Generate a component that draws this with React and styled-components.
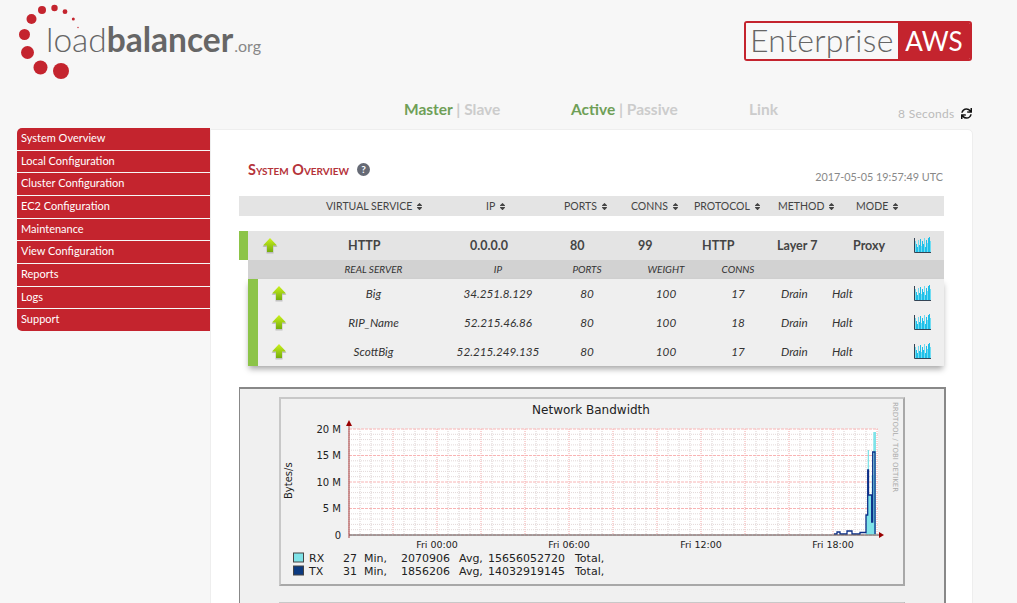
import React from 'react'
import styled, { createGlobalStyle } from 'styled-components'
import { FaSort, FaSync } from 'react-icons/fa'

const Global = createGlobalStyle`
  html, body { margin: 0; padding: 0; height: 603px; overflow: hidden; background: #f7f7f7; }
  body { font-family: Lato, 'Open Sans', sans-serif; color: #444; }
`
const Page = styled.div`
  width: 1017px;
  height: 603px;
  overflow: hidden;
`
const Header = styled.header`
  display: flex;
  justify-content: space-between;
  height: 96px;
  padding: 0 45px 0 18px;
`
const Logo = styled.div`
  position: relative;
  width: 250px;
  height: 82px;
`
const LogoText = styled.div`
  position: absolute;
  left: 28px;
  top: 18px;
  font-size: 33.5px;
  line-height: 42px;
  color: #666;
  font-weight: 300;
  white-space: nowrap;
  b { font-weight: 700; }
  small { font-size: 16px; font-weight: 400; color: #888; margin-left: 1px; }
`
const Badge = styled.div`
  display: flex;
  align-self: flex-start;
  margin-top: 21px;
  height: 40px;
  width: 228px;
  box-sizing: border-box;
  border: 2px solid #c4242e;
  border-radius: 3px;
  overflow: hidden;
`
const BadgeLight = styled.div`
  flex: 1;
  background: #f8f8f8;
  color: #666;
  font-size: 32px;
  font-weight: 300;
  line-height: 33px;
  padding-left: 4px;
  letter-spacing: 0.3px;
  white-space: nowrap;
`
const BadgeDark = styled.div`
  width: 72px;
  flex: none;
  background: #c4242e;
  color: #fff;
  font-size: 26px;
  font-weight: 400;
  line-height: 36px;
  text-align: center;
`
const StatusBar = styled.div`
  display: flex;
  height: 32px;
  padding-left: 404px;
  align-items: flex-start;
`
const StatusGroup = styled.div`
  width: ${p => p.$w}px;
  font-size: 15.5px;
  line-height: 26px;
  font-weight: 700;
  color: #ccc;
  white-space: nowrap;
  b { color: #6f9f57; font-weight: 700; }
`
const Timer = styled.div`
  display: flex;
  align-items: center;
  gap: 6px;
  margin-top: 10px;
  font-size: 12px;
  line-height: 15px;
  color: #bbb;
  letter-spacing: 0.3px;
  svg { color: #111; }
`
const Body = styled.div`
  display: flex;
  align-items: flex-start;
  padding-left: 17px;
`
const Sidebar = styled.nav`
  width: 193px;
  flex: none;
`
const MenuItem = styled.div`
  height: 21.66px;
  margin-bottom: 1px;
  background: #c4242e;
  color: #fff;
  font-size: 11px;
  line-height: 20px;
  padding-left: 4px;
  box-sizing: border-box;
  &:first-child { border-top-left-radius: 5px; }
  &:last-child { border-bottom-left-radius: 5px; }
`
const Main = styled.main`
  width: 763px;
  height: 480px;
  margin-top: 1px;
  box-sizing: border-box;
  background: #fff;
  border: 1px solid #eee;
  border-top-right-radius: 5px;
  padding: 0 28px;
`
const TitleRow = styled.div`
  display: flex;
  align-items: center;
  justify-content: space-between;
  height: 66px;
  padding: 16px 0 0 9px;
  box-sizing: border-box;
`
const Title = styled.h1`
  display: flex;
  align-items: center;
  gap: 8px;
  margin: 0 0 3px;
  font-size: 14.4px;
  font-weight: 700;
  font-variant: small-caps;
  color: #b5333a;
`
const Help = styled.span`
  display: inline-block;
  width: 13px;
  height: 13px;
  border-radius: 50%;
  background: #666a75;
  color: #fff;
  font-size: 10px;
  line-height: 13px;
  text-align: center;
  font-variant: normal;
`
const DateText = styled.span`
  font-size: 10.8px;
  color: #888;
  margin: 10px 1px 0 0;
`
const Row = styled.div`
  display: grid;
  align-items: center;
  white-space: nowrap;
`
const HeadRow = styled(Row)`
  grid-template-columns: 87px 160px 78px 67px 63px 84px 78px 1fr;
  height: 20px;
  background: #e4e4e4;
  font-size: 10.5px;
  color: #444;
  span { display: flex; align-items: center; gap: 3px; }
`
const ServiceRow = styled(Row)`
  grid-template-columns: 14px 86px 122px 100px 68px 64px 75px 76px 61px 1fr;
  height: 29px;
  margin-top: 15px;
  background: #e4e4e4;
  border-left: 9px solid #8cc448;
  font-size: 12.5px;
  font-weight: 700;
  color: #444;
`
const ServerGrid = styled(Row)`
  grid-template-columns: 63px 125px 124px 54px 104px 40px 74px 82px 1fr;
  margin-left: 9px;
  font-style: italic;
`
const ServerHead = styled(ServerGrid)`
  height: 19px;
  background: #d2d2d2;
  font-size: 10px;
  color: #333;
`
const ServerList = styled.div`
  margin-left: 9px;
  background: #efefef;
  border-left: 10px solid #8cc448;
  box-shadow: 0 4px 6px -1px rgba(0, 0, 0, 0.35);
`
const ServerRow = styled(ServerGrid)`
  grid-template-columns: 53px 125px 124px 54px 104px 40px 74px 82px 1fr;
  margin-left: 0;
  height: 29px;
  font-size: 11.7px;
  color: #333;
`
const Center = styled.span`
  text-align: center;
  margin-bottom: 2px;
`
const Left = styled.span`
  padding-left: ${p => p.$pad || 0}px;
  margin-bottom: 2px;
`
const ArrowCell = styled.span`
  display: flex;
  padding-left: 13px;
`
const GraphBox = styled.section`
  margin: 21px -2px 0 0;
  height: 240px;
  box-sizing: border-box;
  background: #f0f0f0;
  border: 1px solid #888;
  border-right-width: 2px;
  border-top-width: 2px;
  padding: 8px 39px 0 39px;
`
const GraphFrame = styled.div`
  height: 189px;
  margin-bottom: 16px;
  box-sizing: border-box;
  background: #f1f1f1;
  border: 2px solid #c8c8c8;
  border-right-color: #a8a8a8;
  border-bottom-color: #a8a8a8;
  svg { display: block; margin: -2px; }
`

const UpArrow = () => (
  <svg width="16" height="17" viewBox="0 0 16 17">
    <defs>
      <linearGradient id="up" x1="0" y1="0" x2="0" y2="1">
        <stop offset="0" stopColor="#ccf21c" />
        <stop offset="1" stopColor="#74ad0c" />
      </linearGradient>
    </defs>
    <path d="M8 1.5 15.5 9H11.5V15.5H4.5V9H.5Z" fill="#555" opacity=".3" transform="translate(0 1)" />
    <path d="M8 1 15 8.5H11V15H5V8.5H1Z" fill="url(#up)" />
  </svg>
)

const bars = [11, 8, 5, 12, 7, 13, 6, 11, 8, 14, 5, 12, 9, 14, 15, 11]
const GraphIcon = () => (
  <svg width="18" height="17" viewBox="0 0 18 17">
    {bars.map((h, i) => (
      <rect key={i} x={1 + i} y={15 - h} width="1" height={h} fill={i % 3 ? '#1fbfe8' : '#6fdcf2'} />
    ))}
    <path d="M.5 1V15.5H17" fill="none" stroke="#345" strokeWidth="1" />
  </svg>
)

const Sort = ({ children }) => (
  <span>{children} <FaSort size={9} /></span>
)

const menu = ['System Overview', 'Local Configuration', 'Cluster Configuration', 'EC2 Configuration', 'Maintenance', 'View Configuration', 'Reports', 'Logs', 'Support']

const servers = [
  { name: 'Big', ip: '34.251.8.129', conns: 17 },
  { name: 'RIP_Name', ip: '52.215.46.86', conns: 18 },
  { name: 'ScottBig', ip: '52.215.249.135', conns: 17 },
]

const logoDots = [
  [43, 71, 8], [22.5, 67.5, 7], [9.5, 52.5, 6.5], [6.5, 34.5, 5.5], [13.5, 19, 5],
  [24, 10, 4], [36.5, 8, 3.2], [47, 11.7, 2.4], [55.3, 19, 1.5], [60, 27.5, 0.7],
]

// chart area in frame coordinates
const X0 = 70
const X1 = 599
const Y0 = 138
const Y20 = 32
const vLines = Array.from({ length: 49 }, (_, i) => X0 + i * 11).filter(x => x <= X1)
const hLines = Array.from({ length: 21 }, (_, i) => Y0 - i * 5.3)

const labelFont = { fontFamily: '"DejaVu Sans", sans-serif', fontSize: 10, fill: '#222' }

const LegendRow = ({ y, color, name, min, avg, total }) => (
  <g style={{ ...labelFont, fontSize: 11 }}>
    <rect x="14.5" y={y - 9} width="10" height="9" fill={color} stroke="#444" />
    <text x="30" y={y}>{name}</text>
    <text x="64" y={y}>{min}</text>
    <text x="85" y={y}>Min,</text>
    <text x="122" y={y}>{avg}</text>
    <text x="180" y={y}>Avg,</text>
    <text x="209" y={y}>{total}</text>
    <text x="296" y={y}>Total,</text>
  </g>
)

const Chart = () => (
  <svg width="626" height="189" viewBox="0 0 626 189">
    <rect x={X0} y={Y20} width={X1 - X0} height={Y0 - Y20} fill="#fff" />
    {vLines.map((x, i) => (
      <line key={x} x1={x} x2={x} y1={Y20} y2={Y0} stroke={i % 4 === 0 ? '#f4a8a8' : '#dcd0d0'} strokeDasharray="1 1" />
    ))}
    {hLines.map((y, i) => (
      <line key={i} x1={X0} x2={X1} y1={y} y2={y} stroke={i % 5 === 0 ? '#f8b4b4' : '#e2d8d8'} strokeDasharray={i % 5 === 0 ? '3 1' : '1 1'} />
    ))}
    <path d="M587 137.5V118H588.7V53H590V98H592.7V78H594.3V35H597V137.5Z" fill="#7fe3e8" />
    <path d="M555 137H558V135H561V137H568V134H573V137H581V135.5H587V118H588.7V73H589.5V98H592.7V125H593.7V55H596V137" fill="none" stroke="#0c2f88" strokeWidth="1.3" />
    <line x1={X0} x2={X1 + 3} y1={Y0} y2={Y0} stroke="#555" />
    <line x1={X0} x2={X0} y1={Y0 + 3} y2={Y20 - 4} stroke="#a04040" />
    <path d={`M${X0 - 3} ${Y20 - 3}L${X0} ${Y20 - 9}L${X0 + 3} ${Y20 - 3}Z`} fill="#900" />
    <path d={`M${X1 + 1} ${Y0 - 3}L${X1 + 6} ${Y0}L${X1 + 1} ${Y0 + 3}Z`} fill="#900" />
    <text x="312" y="17" textAnchor="middle" style={{ ...labelFont, fontSize: 12 }}>Network Bandwidth</text>
    <text transform="translate(13 102) rotate(-90)" style={labelFont}>Bytes/s</text>
    {['0', '5 M', '10 M', '15 M', '20 M'].map((t, i) => (
      <text key={t} x="62" y={Y0 + 3.5 - i * 26.4} textAnchor="end" style={labelFont}>{t}</text>
    ))}
    {[['Fri 00:00', 158], ['Fri 06:00', 290], ['Fri 12:00', 422], ['Fri 18:00', 554]].map(([t, x]) => (
      <text key={t} x={x} y="151" textAnchor="middle" style={{ ...labelFont, fontSize: 9.5 }}>{t}</text>
    ))}
    <LegendRow y={165} color="#7fe3e8" name="RX" min="27" avg="2070906" total="15656052720" />
    <LegendRow y={178} color="#0c3a80" name="TX" min="31" avg="1856206" total="14032919145" />
    <text transform="translate(614 5) rotate(90)" style={{ fontFamily: '"DejaVu Sans", sans-serif', fontSize: 7, fill: '#aaa' }}>RRDTOOL / TOBI OETIKER</text>
  </svg>
)

const App = () => (
  <Page>
    <Global />
    <Header>
      <Logo>
        <svg width="62" height="82" viewBox="0 0 62 82">
          {logoDots.map(([x, y, r]) => <circle key={x} cx={x} cy={y} r={r} fill="#c4242e" />)}
        </svg>
        <LogoText>load<b>balancer</b><small>.org</small></LogoText>
      </Logo>
      <Badge>
        <BadgeLight>Enterprise</BadgeLight>
        <BadgeDark>AWS</BadgeDark>
      </Badge>
    </Header>
    <StatusBar>
      <StatusGroup $w={167}><b>Master</b> | Slave</StatusGroup>
      <StatusGroup $w={178}><b>Active</b> | Passive</StatusGroup>
      <StatusGroup $w={149}>Link</StatusGroup>
      <Timer>8 Seconds <FaSync size={11} /></Timer>
    </StatusBar>
    <Body>
      <Sidebar>
        {menu.map(m => <MenuItem key={m}>{m}</MenuItem>)}
      </Sidebar>
      <Main>
        <TitleRow>
          <Title>System Overview <Help>?</Help></Title>
          <DateText>2017-05-05 19:57:49 UTC</DateText>
        </TitleRow>
        <HeadRow>
          <i />
          <Sort>VIRTUAL SERVICE</Sort>
          <Sort>IP</Sort>
          <Sort>PORTS</Sort>
          <Sort>CONNS</Sort>
          <Sort>PROTOCOL</Sort>
          <Sort>METHOD</Sort>
          <Sort>MODE</Sort>
        </HeadRow>
        <ServiceRow>
          <i />
          <UpArrow />
          <span>HTTP</span>
          <span>0.0.0.0</span>
          <span>80</span>
          <span>99</span>
          <span>HTTP</span>
          <span>Layer 7</span>
          <span>Proxy</span>
          <GraphIcon />
        </ServiceRow>
        <ServerHead>
          <i />
          <Center>REAL SERVER</Center>
          <Center>IP</Center>
          <Center>PORTS</Center>
          <Center>WEIGHT</Center>
          <Center>CONNS</Center>
        </ServerHead>
        <ServerList>
          {servers.map(s => (
            <ServerRow key={s.name}>
              <ArrowCell><UpArrow /></ArrowCell>
              <Center>{s.name}</Center>
              <Center>{s.ip}</Center>
              <Center>80</Center>
              <Center>100</Center>
              <Center>{s.conns}</Center>
              <Left $pad={23}>Drain</Left>
              <Left>Halt</Left>
              <GraphIcon />
            </ServerRow>
          ))}
        </ServerList>
        <GraphBox>
          <GraphFrame><Chart /></GraphFrame>
          <GraphFrame />
        </GraphBox>
      </Main>
    </Body>
  </Page>
)

export default App
